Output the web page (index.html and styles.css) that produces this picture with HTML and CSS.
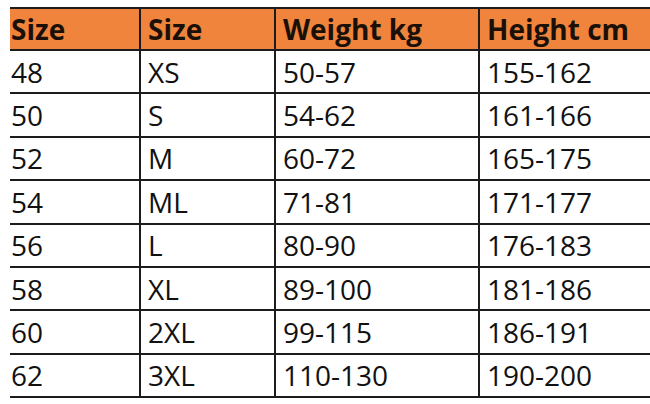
FILE: index.html
```html
<!DOCTYPE html>
<html>
<head>
<meta charset="utf-8">
<link rel="stylesheet" href="styles.css">
</head>
<body>
<table class="size-table">
  <colgroup>
    <col class="c1"><col class="c2"><col class="c3"><col class="c4">
  </colgroup>
  <thead>
    <tr class="head"><th>Size</th><th>Size</th><th>Weight kg</th><th>Height cm</th></tr>
  </thead>
  <tbody>
    <tr><td>48</td><td>XS</td><td>50-57</td><td>155-162</td></tr>
    <tr><td>50</td><td>S</td><td>54-62</td><td>161-166</td></tr>
    <tr><td>52</td><td>M</td><td>60-72</td><td>165-175</td></tr>
    <tr><td>54</td><td>ML</td><td>71-81</td><td>171-177</td></tr>
    <tr><td>56</td><td>L</td><td>80-90</td><td>176-183</td></tr>
    <tr><td>58</td><td>XL</td><td>89-100</td><td>181-186</td></tr>
    <tr><td>60</td><td>2XL</td><td>99-115</td><td>186-191</td></tr>
    <tr><td>62</td><td>3XL</td><td>110-130</td><td>190-200</td></tr>
  </tbody>
</table>
</body>
</html>
```
FILE: styles.css
```css
html, body {
  margin: 0;
  padding: 0;
  background: #ffffff;
}
body {
  padding-top: 7px;
  padding-left: 10px;
  font-family: "Open Sans", "Liberation Sans", sans-serif;
  color: #111111;
}
.size-table {
  border-collapse: collapse;
  table-layout: fixed;
  width: 640px;
}
.c1 { width: 130px; }
.c2 { width: 135px; }
.c3 { width: 204px; }
.c4 { width: 171px; }
.size-table th,
.size-table td {
  border: 2px solid #1c1c1c;
  text-align: left;
  padding: 0 0 0 7px;
  font-size: 28px;
  line-height: 1;
  white-space: nowrap;
  overflow: hidden;
}
.size-table th:first-child,
.size-table td:first-child {
  border-left: none;
  padding-left: 1px;
}
.size-table th:last-child,
.size-table td:last-child {
  border-right: none;
}
.head th {
  background: #f0843c;
  font-weight: 700;
  height: 40px;
  color: #1a1008;
}
.size-table td {
  height: 41.4px;
  font-weight: 400;
}
```
